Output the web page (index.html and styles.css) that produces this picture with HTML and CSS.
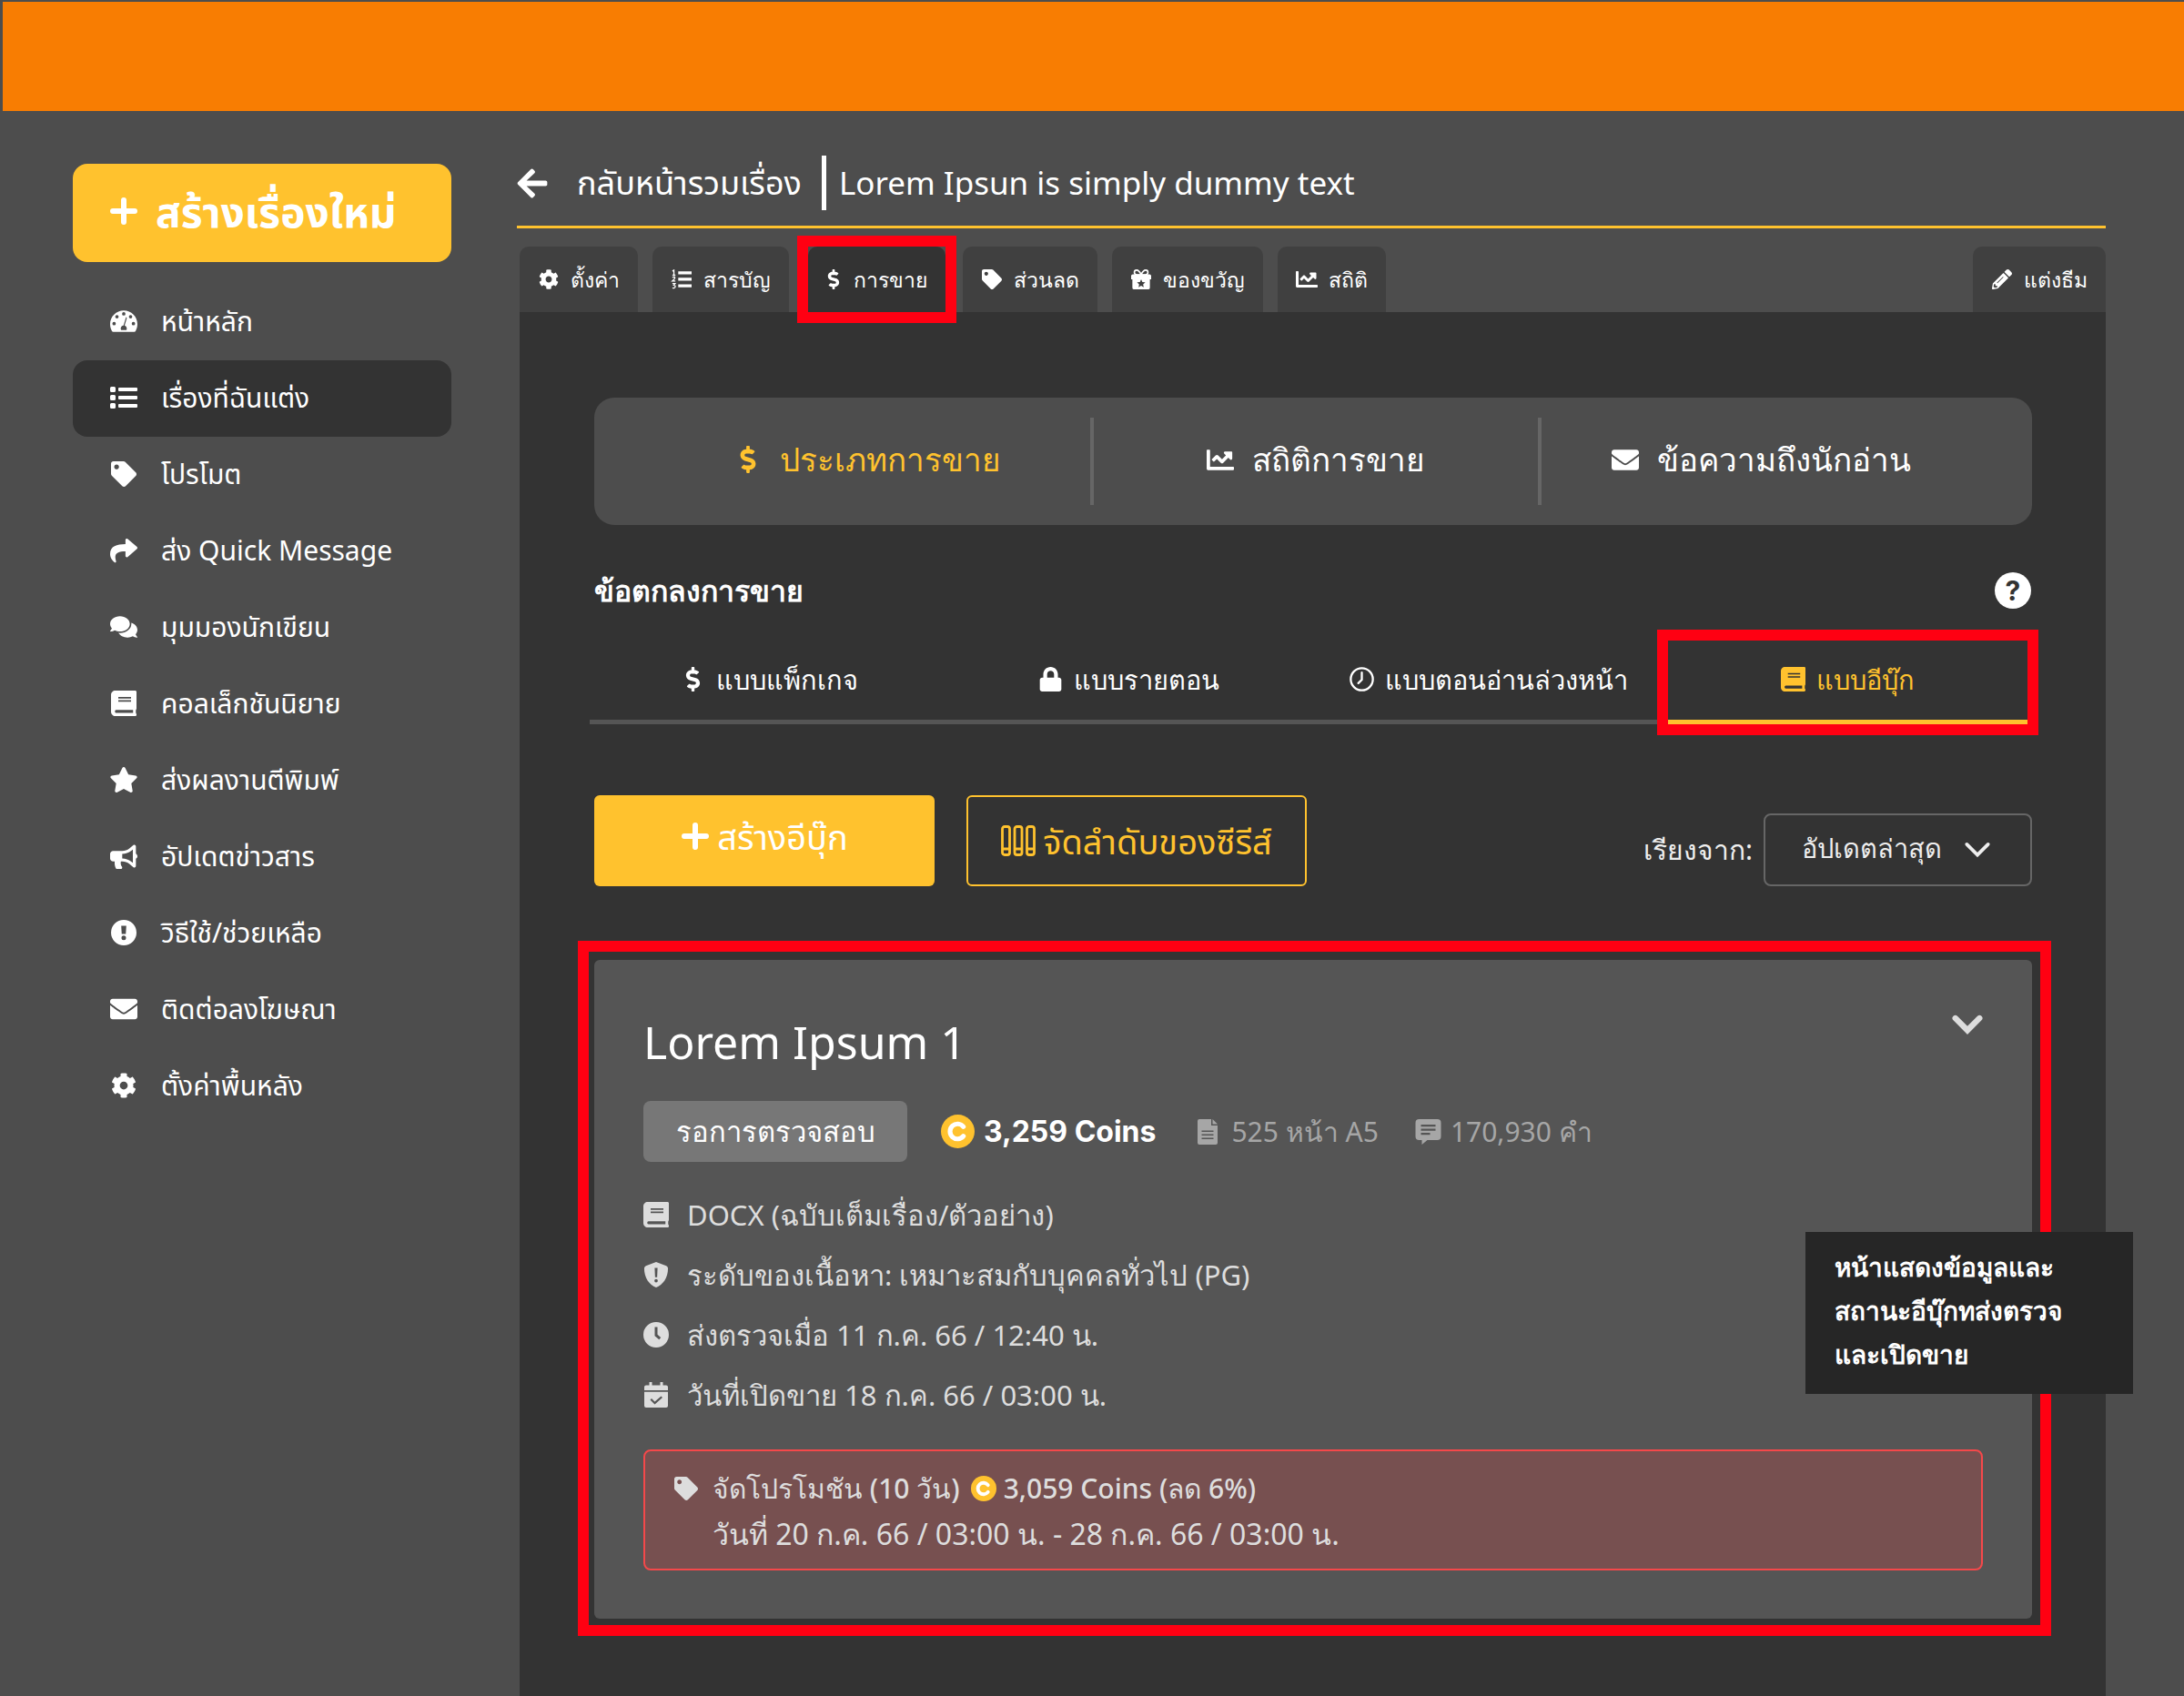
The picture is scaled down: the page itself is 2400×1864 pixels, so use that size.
FILE: index.html
```html
<!DOCTYPE html>
<html lang="th">
<head>
<meta charset="utf-8">
<meta name="viewport" content="width=device-width, initial-scale=1">
<title>การขาย - Lorem Ipsun is simply dummy text</title>
<link rel="stylesheet" href="styles.css">
</head>
<body>
<svg class="sprite" aria-hidden="true">
  <symbol id="i-plus" viewBox="0 0 30 30"><path d="M15 3v24M3 15h24" fill="none" stroke="currentColor" stroke-width="6" stroke-linecap="round"/></symbol>
  <symbol id="i-gauge" viewBox="0 32 576 448"><path fill-rule="evenodd" d="M288 32C129 32 0 161 0 320c0 52.800 14.200 102.300 39 144.800 5.600 9.600 16.300 15.200 27.500 15.200h443c11.100 0 21.800-5.600 27.400-15.200C561.700 422.300 576 372.800 576 320c0-159-129-288-288-288zM288 64a36 36 0 1 1 0 72 36 36 0 1 1 0-72zM144 124a36 36 0 1 1 0 72 36 36 0 1 1 0-72zM432 124a36 36 0 1 1 0 72 36 36 0 1 1 0-72zM84 272a36 36 0 1 1 0 72 36 36 0 1 1 0-72zM492 272a36 36 0 1 1 0 72 36 36 0 1 1 0-72zM335 169c13 4 20 17 16 30l-45 150c27 9 46 34 46 63 0 14-4 22-9 32H233c-6-10-9-20-9-32 0-34 26-62 59-64l44-148c3-12 9-28 8-31z"/></symbol>
  <symbol id="i-list" viewBox="0 0 30 24"><path d="M0 1.500Q0 0 1.500 0h3Q6 0 6 1.500v3Q6 6 4.500 6h-3Q0 6 0 4.500zM0 10.500Q0 9 1.500 9h3Q6 9 6 10.500v3Q6 15 4.500 15h-3Q0 15 0 13.500zM0 19.500Q0 18 1.500 18h3Q6 18 6 19.500v3Q6 24 4.500 24h-3Q0 24 0 22.500zM10 1h19q1 0 1 1v2q0 1-1 1H10q-1 0-1-1V2q0-1 1-1zM10 10h19q1 0 1 1v2q0 1-1 1H10q-1 0-1-1v-2q0-1 1-1zM10 19h19q1 0 1 1v2q0 1-1 1H10q-1 0-1-1v-2q0-1 1-1z"/></symbol>
  <symbol id="i-tag" viewBox="0 0 512 512"><path d="M0 252.118V48C0 21.490 21.490 0 48 0h204.118a48 48 0 0 1 33.941 14.059l211.882 211.882c18.745 18.745 18.745 49.137 0 67.882L293.823 497.941c-18.745 18.745-49.137 18.745-67.882 0L14.059 286.059A48 48 0 0 1 0 252.118zM112 64c-26.510 0-48 21.490-48 48s21.490 48 48 48 48-21.490 48-48-21.490-48-48-48z"/></symbol>
  <symbol id="i-share" viewBox="0 32 512 448"><path d="M503.691 189.836L327.687 37.851C312.281 24.546 288 35.347 288 56.015v80.053C127.371 137.907 0 170.100 0 322.326c0 61.441 39.581 122.309 83.333 154.132 13.653 9.931 33.111-2.533 28.077-18.631C66.066 312.814 132.917 274.316 288 272.085V360c0 20.700 24.300 31.453 39.687 18.164l176.004-152c11.071-9.562 11.086-26.753 0-36.328z"/></symbol>
  <symbol id="i-comments" viewBox="0 32 576 448"><path d="M416 192c0-88.400-93.100-160-208-160S0 103.600 0 192c0 34.300 14.100 65.900 38 92-13.400 30.200-35.500 54.200-35.800 54.500-2.200 2.300-2.800 5.700-1.500 8.700S4.800 352 8 352c36.600 0 66.900-12.300 88.700-25 32.200 15.700 70.300 25 111.300 25 114.900 0 208-71.600 208-160zm122 220c23.900-26 38-57.700 38-92 0-66.900-53.500-124.200-129.300-148.100.9 6.600 1.300 13.300 1.300 20.100 0 105.900-107.700 192-240 192-10.800 0-21.300-.8-31.700-1.900C207.800 439.600 281.800 480 368 480c41 0 79.100-9.200 111.300-25 21.800 12.700 52.100 25 88.700 25 3.200 0 6.100-1.900 7.300-4.800 1.300-2.900.7-6.300-1.500-8.700-.3-.3-22.400-24.200-35.800-54.500z"/></symbol>
  <symbol id="i-book" viewBox="0 0 448 448"><path fill-rule="evenodd" d="M448 315V21c0-12-11-21-24-21H76C34 0 0 34 0 76v296c0 42 34 76 76 76h348c13 0 24-8 24-20v-14c0-7-4-12-9-16-4-14-4-48 0-62 5-4 9-10 9-21zM128 112h224v26H128zM128 168h224v26H128zM388 392H90c-28 0-28-52 0-52h298z"/></symbol>
  <symbol id="i-star" viewBox="20 0 536 512"><path d="M259.300 17.800L194 150.200 47.900 171.500c-26.200 3.800-36.700 36.100-17.700 54.600l105.700 103-25 145.500c-4.500 26.300 23.200 46 46.400 33.700L288 439.600l130.700 68.700c23.200 12.200 50.900-7.400 46.400-33.700l-25-145.500 105.700-103c19-18.500 8.500-50.800-17.700-54.600L382 150.200 316.700 17.800c-11.700-23.600-45.600-23.900-57.400 0z"/></symbol>
  <symbol id="i-horn" viewBox="0 0 576 480"><path d="M576 240c0-23.630-12.950-44.040-32-55.120V32.010C544 23.260 537.020 0 512 0c-7.120 0-14.190 2.380-19.980 7.020l-85.030 68.030C364.280 109.190 310.660 128 256 128H64c-35.350 0-64 28.650-64 64v96c0 35.350 28.650 64 64 64h33.700c-1.390 10.480-2.180 21.140-2.180 32 0 39.770 9.260 77.350 25.560 110.940 5.190 10.690 16.520 17.060 28.400 17.060h74.280c26.050 0 41.690-29.840 25.900-50.560-16.400-21.520-26.150-48.360-26.150-77.440 0-11.110 1.620-21.790 4.410-32H256c54.660 0 108.280 18.810 150.980 52.950l85.030 68.030a32.023 32.023 0 0 0 19.980 7.020c24.920 0 32-22.780 32-32V295.130C563.050 284.040 576 263.630 576 240zm-96 141.420l-33.050-26.440C392.950 311.780 325.120 288 256 288v-96c69.120 0 136.950-23.780 190.950-66.980L480 98.580v282.840z"/></symbol>
  <symbol id="i-alert" viewBox="0 0 30 30"><path fill-rule="evenodd" d="M15 0a15 15 0 1 1 0 30 15 15 0 1 1 0-30zM12 7l.6 9.500h4.800L18 7zM15 18.500a2.700 2.700 0 1 0 0 5.400 2.700 2.700 0 1 0 0-5.400z"/></symbol>
  <symbol id="i-mail" viewBox="0 64 512 384"><path d="M502.300 190.800c3.900-3.100 9.700-.2 9.700 4.700V400c0 26.500-21.500 48-48 48H48c-26.500 0-48-21.500-48-48V195.600c0-5 5.700-7.800 9.700-4.700 22.400 17.400 52.100 39.500 154.100 113.600 21.100 15.400 56.700 47.800 92.200 47.600 35.700.3 72-32.800 92.300-47.600 102-74.100 131.600-96.300 154-113.700zM256 320c23.200.4 56.600-29.200 73.400-41.400 132.700-96.300 142.800-104.700 173.400-128.700 5.800-4.500 9.200-11.500 9.200-18.900v-19c0-26.500-21.500-48-48-48H48c-26.500 0-48 21.500-48 48v19c0 7.400 3.400 14.300 9.200 18.900 30.600 23.900 40.700 32.400 173.400 128.700 16.800 12.200 50.200 41.800 73.400 41.400z"/></symbol>
  <symbol id="i-cog" viewBox="0 0 512 512"><path d="M487.400 315.700l-42.600-24.600c4.300-23.200 4.300-47 0-70.200l42.600-24.600c4.900-2.800 7.100-8.600 5.500-14-11.100-35.600-30-67.800-54.700-94.600-3.800-4.100-10-5.100-14.800-2.300L380.800 110c-17.900-15.400-38.500-27.300-60.800-35.100V25.800c0-5.600-3.900-10.500-9.400-11.700-36.700-8.200-74.300-7.800-109.200 0-5.500 1.200-9.400 6.100-9.400 11.700V75c-22.200 7.900-42.800 19.800-60.800 35.100L88.700 85.500c-4.900-2.800-11-1.900-14.800 2.300-24.700 26.700-43.600 58.900-54.700 94.600-1.700 5.400.6 11.200 5.500 14L67.300 221c-4.300 23.200-4.300 47 0 70.200l-42.600 24.600c-4.900 2.800-7.100 8.600-5.500 14 11.100 35.600 30 67.800 54.700 94.600 3.800 4.100 10 5.100 14.800 2.300l42.600-24.600c17.900 15.400 38.500 27.300 60.800 35.100v49.200c0 5.600 3.900 10.500 9.400 11.700 36.700 8.200 74.300 7.800 109.200 0 5.500-1.200 9.400-6.100 9.400-11.700v-49.200c22.200-7.900 42.800-19.800 60.800-35.100l42.600 24.600c4.900 2.800 11 1.900 14.800-2.300 24.700-26.700 43.600-58.900 54.700-94.600 1.500-5.500-.7-11.300-5.600-14.100zM256 336c-44.100 0-80-35.900-80-80s35.900-80 80-80 80 35.900 80 80-35.900 80-80 80z"/></symbol>
  <symbol id="i-back" viewBox="0 30 448 452"><path d="M257.500 445.100l-22.200 22.200c-9.400 9.400-24.600 9.400-33.900 0L7 273c-9.400-9.400-9.400-24.600 0-33.900L201.400 44.700c9.400-9.400 24.600-9.400 33.900 0l22.200 22.200c9.500 9.500 9.300 25-.4 34.300L136.600 216H424c13.300 0 24 10.700 24 24v32c0 13.300-10.700 24-24 24H136.600l120.500 114.800c9.800 9.300 10 24.800.4 34.300z"/></symbol>
  <symbol id="i-numlist" viewBox="0 0 24 24"><path d="M8 2.500h16v3.500H8zM8 10.200h16v3.500H8zM8 18h16v3.500H8z"/><path d="M1 2l1.800-1v6M1 7h3.600M1 9.800q3-1.800 3 .4Q4 11.500 1 14h3.600M1 17h3.200L2.600 19q2 .2 1.800 1.900Q4 23 1 22.200" fill="none" stroke="currentColor" stroke-width="1.400"/></symbol>
  <symbol id="i-dollar" viewBox="0 0 288 512"><path d="M209.200 233.400l-108-31.600C88.700 198.200 80 186.500 80 173.500c0-16.300 13.200-29.500 29.500-29.500h66.300c12.200 0 24.200 3.700 34.200 10.500 6.100 4.100 14.300 3.100 19.500-2l34.800-34c7.100-6.900 6.100-18.400-1.800-24.500C238 74.800 207.400 64.100 176 64V16c0-8.800-7.200-16-16-16h-32c-8.800 0-16 7.200-16 16v48h-2.500C45.800 64-5.400 118.700.5 183.600c4.200 46.100 39.400 83.600 83.800 96.600l102.500 30c12.500 3.700 21.200 15.300 21.200 28.300 0 16.300-13.200 29.500-29.500 29.500h-66.300C100 368 88 364.300 78 357.500c-6.100-4.100-14.300-3.100-19.500 2l-34.800 34c-7.100 6.900-6.100 18.400 1.800 24.500 24.500 19.200 55.100 29.900 86.500 30v48c0 8.800 7.200 16 16 16h32c8.800 0 16-7.200 16-16v-48.200c46.600-.9 90.300-28.600 105.700-72.700 21.500-61.600-14.600-124.800-72.500-141.700z"/></symbol>
  <symbol id="i-gift" viewBox="0 0 24 24"><path fill-rule="evenodd" d="M0 8q0-2 2-2h20q2 0 2 2v4H0zM1.500 12h21v10q0 2-2 2h-17q-2 0-2-2zM12 12l1.500 3.200 3.500.4-2.600 2.400.7 3.500-3.100-1.800-3.100 1.800.7-3.500L7 15.600l3.500-.4z"/><path d="M12 6.500C10 2 8 1 6.500 1 3 1 3 6 6.500 6.500zM12 6.500C14 2 16 1 17.500 1 21 1 21 6 17.500 6.500z" fill="none" stroke="currentColor" stroke-width="1.800"/></symbol>
  <symbol id="i-chart" viewBox="0 64 512 384"><path d="M496 384H64V80c0-8.840-7.160-16-16-16H16C7.160 64 0 71.160 0 80v336c0 17.670 14.330 32 32 32h464c8.840 0 16-7.160 16-16v-32c0-8.840-7.160-16-16-16zM464 96H345.940c-21.380 0-32.090 25.850-16.970 40.970l32.400 32.400L288 242.750l-73.370-73.370c-12.500-12.500-32.760-12.500-45.250 0l-68.690 68.690c-6.250 6.250-6.250 16.380 0 22.630l22.620 22.620c6.250 6.250 16.380 6.250 22.630 0L192 237.250l73.370 73.370c12.500 12.500 32.760 12.500 45.250 0l96-96 32.400 32.400c15.120 15.120 40.970 4.410 40.970-16.970V112c.01-8.840-7.150-16-15.990-16z"/></symbol>
  <symbol id="i-pencil" viewBox="0 0 512 512"><path fill-rule="evenodd" d="M497.900 142.100l-46.100 46.100c-4.700 4.700-12.300 4.700-17 0l-111-111c-4.700-4.700-4.700-12.300 0-17l46.100-46.100c18.700-18.700 49.100-18.700 67.900 0l60.100 60.100c18.800 18.700 18.800 49.100 0 67.900zM284.200 99.800L21.600 362.400.4 483.900c-2.900 16.400 11.400 30.600 27.800 27.800l121.500-21.300 262.600-262.600c4.700-4.700 4.700-12.300 0-17l-111-111c-4.800-4.700-12.400-4.700-17.100 0zM128 340l150-150q18-4 14 14L142 354q-18 4-14-14zM88 424h48v36l-66 12-30-30 12-66h36z"/></symbol>
  <symbol id="i-lock" viewBox="0 0 448 512"><path d="M400 224h-24v-72C376 68.200 307.800 0 224 0S72 68.200 72 152v72H48c-26.500 0-48 21.500-48 48v192c0 26.500 21.500 48 48 48h352c26.500 0 48-21.500 48-48V272c0-26.500-21.500-48-48-48zm-104 0H152v-72c0-39.700 32.300-72 72-72s72 32.300 72 72v72z"/></symbol>
  <symbol id="i-clock-o" viewBox="0 0 28 28"><circle cx="14" cy="14" r="12.600" fill="none" stroke="currentColor" stroke-width="2.400"/><path d="M14 6.500v8l-4 4" fill="none" stroke="currentColor" stroke-width="2.400" stroke-linecap="round"/></symbol>
  <symbol id="i-rack" viewBox="0 0 38 34"><g fill="none" stroke="currentColor" stroke-width="2.800"><rect x="1.500" y="1.500" width="8" height="31" rx="2.500"/><rect x="15" y="1.500" width="8" height="31" rx="2.500"/><rect x="28.500" y="1.500" width="8" height="31" rx="2.500"/><path d="M1.500 26h8M15 26h8M28.500 26h8"/></g></symbol>
  <symbol id="i-down" viewBox="0 0 32 20"><path d="M3.500 3.500L16 16 28.500 3.500" fill="none" stroke="currentColor" stroke-width="var(--w, 4)" stroke-linecap="round"/></symbol>
  <symbol id="i-coin" viewBox="0 0 36 36"><circle cx="18" cy="18" r="18" fill="#ffc22e"/><path d="M24 13a8 8 0 1 0 0 10" fill="none" stroke="#fff" stroke-width="5" stroke-linecap="round"/></symbol>
  <symbol id="i-doc" viewBox="0 0 22 28"><path fill-rule="evenodd" d="M2 0h13v7h7v19q0 2-2 2H2q-2 0-2-2V2q0-2 2-2zM16.500 0L22 5.500h-5.500zM4.500 12.500h13v1.600h-13zM4.500 16.500h13v1.600h-13zM4.500 20.500h13v1.600h-13z"/></symbol>
  <symbol id="i-note" viewBox="0 0 28 28"><path fill-rule="evenodd" d="M4 0h20q4 0 4 4v15q0 4-4 4H13l-6 5v-5H4q-4 0-4-4V4q0-4 4-4zM6 6h16v2.200H6zM6 10.500h16v2.200H6zM6 15h10v2.200H6z"/></symbol>
  <symbol id="i-shield" viewBox="0 0 28 30"><path fill-rule="evenodd" d="M14 0l12 4.600q2 1 2 3C28 19 22 27 14 30 6 27 0 19 0 7.600q0-2 2-3zM12.300 7l.5 11h2.400l.5-11zM14 20a2 2 0 1 0 0 4 2 2 0 1 0 0-4z"/></symbol>
  <symbol id="i-clock" viewBox="0 0 28 28"><path fill-rule="evenodd" d="M14 0a14 14 0 1 1 0 28 14 14 0 1 1 0-28zM12.500 5.500v9.700l4.800 4 1.900-2.300-3.700-3.200V5.500z"/></symbol>
  <symbol id="i-cal" viewBox="0 0 26 28"><path fill-rule="evenodd" d="M5.500 0h3v3.500h9V0h3v3.500H24q2 0 2 2V9H0V5.500q0-2 2-2h3.500zM0 10.800h26V26q0 2-2 2H2q-2 0-2-2zM8 18l-1.500 1.600 5 4.800 8.500-7.300-1.500-1.700-7 6z"/></symbol>
</svg>

<header class="topbar"></header>

<div class="layout">
  <aside class="sidebar">
    <button class="create-story" type="button"><svg class="ico"><use href="#i-plus"/></svg>สร้างเรื่องใหม่</button>
    <nav class="menu" aria-label="เมนู">
      <a href="#"><svg class="ico"><use href="#i-gauge"/></svg>หน้าหลัก</a>
      <a href="#" class="active" aria-current="page"><svg class="ico"><use href="#i-list"/></svg>เรื่องที่ฉันแต่ง</a>
      <a href="#"><svg class="ico"><use href="#i-tag"/></svg>โปรโมต</a>
      <a href="#"><svg class="ico"><use href="#i-share"/></svg>ส่ง Quick Message</a>
      <a href="#"><svg class="ico"><use href="#i-comments"/></svg>มุมมองนักเขียน</a>
      <a href="#"><svg class="ico"><use href="#i-book"/></svg>คอลเล็กชันนิยาย</a>
      <a href="#"><svg class="ico"><use href="#i-star"/></svg>ส่งผลงานตีพิมพ์</a>
      <a href="#"><svg class="ico"><use href="#i-horn"/></svg>อัปเดตข่าวสาร</a>
      <a href="#"><svg class="ico"><use href="#i-alert"/></svg>วิธีใช้/ช่วยเหลือ</a>
      <a href="#"><svg class="ico"><use href="#i-mail"/></svg>ติดต่อลงโฆษณา</a>
      <a href="#"><svg class="ico"><use href="#i-cog"/></svg>ตั้งค่าพื้นหลัง</a>
    </nav>
  </aside>

  <main class="main">
    <div class="crumbs">
      <a href="#" class="back"><svg class="ico"><use href="#i-back"/></svg>กลับหน้ารวมเรื่อง</a>
      <h1>Lorem Ipsun is simply dummy text</h1>
    </div>

    <nav class="tabs" aria-label="แท็บเรื่อง">
      <a href="#" class="tab"><svg class="ico"><use href="#i-cog"/></svg>ตั้งค่า</a>
      <a href="#" class="tab"><svg class="ico"><use href="#i-numlist"/></svg>สารบัญ</a>
      <a href="#" class="tab current" aria-current="page"><svg class="ico"><use href="#i-dollar"/></svg>การขาย<span class="callout"></span></a>
      <a href="#" class="tab"><svg class="ico"><use href="#i-tag"/></svg>ส่วนลด</a>
      <a href="#" class="tab"><svg class="ico"><use href="#i-gift"/></svg>ของขวัญ</a>
      <a href="#" class="tab"><svg class="ico"><use href="#i-chart"/></svg>สถิติ</a>
      <a href="#" class="tab theme"><svg class="ico"><use href="#i-pencil"/></svg>แต่งธีม</a>
    </nav>

    <div class="panel">
      <nav class="segments" aria-label="การขาย">
        <a href="#" class="on"><svg class="ico narrow"><use href="#i-dollar"/></svg>ประเภทการขาย</a>
        <a href="#"><svg class="ico"><use href="#i-chart"/></svg>สถิติการขาย</a>
        <a href="#" class="last"><svg class="ico"><use href="#i-mail"/></svg>ข้อความถึงนักอ่าน</a>
      </nav>

      <div class="heading">
        <h2>ข้อตกลงการขาย</h2>
        <button class="help" type="button" aria-label="ช่วยเหลือ">?</button>
      </div>

      <nav class="kinds" aria-label="ประเภทการขาย">
        <a href="#"><svg class="ico"><use href="#i-dollar"/></svg>แบบแพ็กเกจ</a>
        <a href="#"><svg class="ico"><use href="#i-lock"/></svg>แบบรายตอน</a>
        <a href="#"><svg class="ico"><use href="#i-clock-o"/></svg>แบบตอนอ่านล่วงหน้า</a>
        <a href="#" class="on" aria-current="page"><svg class="ico"><use href="#i-book"/></svg>แบบอีบุ๊ก<span class="callout"></span></a>
      </nav>

      <div class="actions">
        <button class="btn solid" type="button"><svg class="ico"><use href="#i-plus"/></svg>สร้างอีบุ๊ก</button>
        <button class="btn line" type="button"><svg class="ico"><use href="#i-rack"/></svg>จัดลำดับของซีรีส์</button>
        <div class="sort">
          <label for="sort">เรียงจาก:</label>
          <div class="picker">
            <select id="sort"><option>อัปเดตล่าสุด</option></select>
            <svg class="ico"><use href="#i-down"/></svg>
          </div>
        </div>
      </div>

      <section class="frame">
        <article class="card">
          <div class="card-head">
            <h3>Lorem Ipsum 1</h3>
            <button class="toggle" type="button" aria-label="ย่อ/ขยาย"><svg class="ico"><use href="#i-down"/></svg></button>
          </div>
          <div class="meta">
            <span class="badge">รอการตรวจสอบ</span>
            <strong class="price"><svg class="coin"><use href="#i-coin"/></svg>3,259 Coins</strong>
            <span class="pages"><svg class="ico"><use href="#i-doc"/></svg>525 หน้า A5</span>
            <span class="words"><svg class="ico"><use href="#i-note"/></svg>170,930 คำ</span>
          </div>
          <ul class="details">
            <li><svg class="ico"><use href="#i-book"/></svg>DOCX (ฉบับเต็มเรื่อง/ตัวอย่าง)</li>
            <li><svg class="ico"><use href="#i-shield"/></svg>ระดับของเนื้อหา: เหมาะสมกับบุคคลทั่วไป (PG)</li>
            <li><svg class="ico"><use href="#i-clock"/></svg>ส่งตรวจเมื่อ 11 ก.ค. 66 / 12:40 น.</li>
            <li><svg class="ico"><use href="#i-cal"/></svg>วันที่เปิดขาย 18 ก.ค. 66 / 03:00 น.</li>
          </ul>
          <div class="promo">
            <svg class="ico"><use href="#i-tag"/></svg>
            <div>
              <p class="promo-title">จัดโปรโมชัน (10 วัน)<svg class="coin"><use href="#i-coin"/></svg>3,059 Coins (ลด 6%)</p>
              <p class="promo-date">วันที่ 20 ก.ค. 66 / 03:00 น. - 28 ก.ค. 66 / 03:00 น.</p>
            </div>
          </div>
        </article>
        <p class="tip" role="note">หน้าแสดงข้อมูลและ<br>สถานะอีบุ๊กทส่งตรวจ<br>และเปิดขาย</p>
      </section>
    </div>
  </main>
</div>
</body>
</html>
```
FILE: styles.css
```css
:root {
  --bg: #4d4d4d;
  --panel: #333;
  --tab: #404040;
  --card: #555;
  --yellow: #ffc22e;
  --red: #ff0012;
  --looped: "Noto Sans", sans-serif;
  --loopless: "Noto Sans", "Noto Sans Thai", sans-serif;
}

* { box-sizing: border-box; }

body {
  display: flex;
  flex-direction: column;
  min-height: 100vh;
  margin: 0;
  background: var(--bg);
  color: #fff;
  font-family: var(--looped);
}

h1, h2, h3, p, ul { margin: 0; padding: 0; font-weight: 400; }
ul { list-style: none; }
a { color: inherit; text-decoration: none; }
button, select { font: inherit; color: inherit; border: 0; background: none; padding: 0; cursor: pointer; }

.sprite { position: absolute; width: 0; height: 0; }
.ico, .coin { flex: none; fill: currentColor; }

.topbar { height: 120px; margin: 2px 0 0 3px; background: #f87d02; }

.layout { display: flex; flex: 1; padding: 0 86px 0 80px; }

/* Sidebar */
.sidebar { flex: none; width: 416px; padding-top: 58px; font-family: var(--loopless); }
.create-story {
  display: flex;
  align-items: center;
  width: 100%;
  height: 108px;
  padding: 0 41px 4px;
  gap: 20px;
  border-radius: 16px;
  background: var(--yellow);
  font-size: 46px;
  font-weight: 700;
  line-height: 60px;
}
.create-story .ico { width: 30px; height: 30px; }
.menu { margin-top: 24px; }
.menu a {
  display: flex;
  align-items: center;
  gap: 26px;
  height: 84px;
  padding: 0 41px 2px;
  border-radius: 16px;
  font-size: 30px;
  line-height: 44px;
}
.menu .active { background: var(--panel); }
.menu .ico { width: 30px; height: 28px; }

/* Header of the story */
.main { flex: 1; display: flex; flex-direction: column; min-width: 0; padding: 46px 0 0 72px; }
.crumbs {
  display: flex;
  align-items: center;
  height: 83px;
  padding-bottom: 14px;
  border-bottom: 3px solid var(--yellow);
  font-family: var(--loopless);
  font-size: 35px;
  line-height: 60px;
}
.back { display: flex; align-items: center; gap: 32px; font-size: 36px; }
.back .ico { width: 34px; height: 33px; }
.crumbs h1 { margin-left: 22px; padding-left: 14px; border-left: 5px solid #fff; font-size: 35px; }

.tabs { display: flex; margin: 20px 0 0 3px; font-size: 23px; line-height: 36px; }
.tab {
  position: relative;
  display: flex;
  align-items: center;
  justify-content: center;
  gap: 12px;
  height: 72px;
  margin-right: 16px;
  padding: 0 20px;
  border-radius: 10px 10px 0 0;
  background: var(--tab);
}
.tab.current { margin: 0 19px 0 5px; gap: 14px; background: var(--panel); }
.tab.theme { margin: 0 0 0 auto; }
.tab .ico { width: 24px; height: 22px; }
.tab.current .ico { width: 16px; }
.callout { position: absolute; inset: -12px; border: 12px solid var(--red); z-index: 1; pointer-events: none; }

/* Panel */
.panel { flex: 1; margin-left: 3px; padding: 94px 60px 66px 64px; background: var(--panel); }
.segments {
  display: grid;
  grid-template-columns: 545fr 491fr 543fr;
  align-items: center;
  height: 140px;
  margin: 0 21px 0 18px;
  border-radius: 22px;
  background: var(--bg);
  font-size: 35px;
  line-height: 48px;
}
.segments a { display: flex; align-items: center; justify-content: center; gap: 20px; height: 96px; padding-bottom: 4px; }
.segments a + a { border-left: 4px solid #666; }
.segments .on { color: var(--yellow); padding-left: 56px; }
.segments .last { padding-right: 56px; }
.segments .ico { width: 30px; height: 23px; }
.segments .narrow { height: 30px; }

.heading { display: flex; align-items: center; justify-content: space-between; margin: 47px 22px 0 18px; height: 50px; }
.heading h2 { font-size: 32px; font-weight: 600; line-height: 50px; }
.help { width: 40px; height: 40px; border-radius: 50%; background: #fff; color: var(--panel); font: 700 30px/40px Inter, sans-serif; }

.kinds { display: grid; grid-template-columns: repeat(4, 1fr); margin: 30px 26px 0 13px; font-size: 29px; font-weight: 500; line-height: 44px; }
.kinds a {
  position: relative;
  display: flex;
  align-items: center;
  justify-content: center;
  gap: 12px;
  height: 92px;
  padding-bottom: 2px;
  border-bottom: 5px solid #555;
}
.kinds .on { color: var(--yellow); border-color: var(--yellow); }
.kinds .ico { width: 27px; height: 27px; }
.kinds .callout { inset: -12px -12px -17px -12px; }

.actions { display: flex; align-items: flex-end; gap: 35px; margin: 78px 21px 0 18px; font-size: 38px; line-height: 54px; font-family: var(--loopless); }
.btn { display: flex; align-items: center; justify-content: center; gap: 8px; width: 374px; height: 100px; border-radius: 6px; }
.solid { background: var(--yellow); padding-bottom: 10px; }
.solid .ico { width: 32px; height: 30px; }
.line { border: 2px solid var(--yellow); color: var(--yellow); }
.line .ico { width: 38px; height: 34px; }
.sort { display: flex; align-items: center; gap: 12px; margin-left: auto; font: 30px/44px var(--looped); color: #eee; }
.picker { position: relative; }
.picker select {
  appearance: none;
  width: 295px;
  height: 80px;
  padding: 0 76px 4px 40px;
  border: 2px solid #666;
  border-radius: 8px;
  font-size: 29px;
}
.picker .ico { position: absolute; right: 45px; top: 30px; width: 30px; height: 20px; pointer-events: none; }

/* Ebook card */
.frame { position: relative; margin-top: 60px; border: 12px solid var(--red); padding: 9px 9px 7px 6px; }
.card { padding: 52px 54px 53px; border-radius: 6px; background: var(--card); }
.card-head { display: flex; align-items: flex-start; justify-content: space-between; }
.card-head h3 { font-size: 50px; line-height: 76px; }
.toggle { display: flex; padding-top: 8px; color: #ddd; --w: 6; }
.toggle .ico { width: 34px; height: 22px; }
.meta { display: flex; align-items: center; margin-top: 27px; line-height: 48px; font-size: 30px; color: #a6a6a6; }
.badge { width: 290px; height: 67px; border-radius: 8px; background: #777; color: #fff; font-size: 31px; line-height: 66px; text-align: center; }
.price { display: flex; align-items: center; gap: 10px; margin-left: 37px; color: #fff; font: 700 32px/48px Inter, sans-serif; }
.price .coin { width: 37px; height: 37px; }
.pages, .words { display: flex; align-items: center; }
.pages { gap: 15px; margin-left: 46px; }
.words { gap: 10px; margin-left: 40px; }
.pages .ico { width: 22px; height: 28px; }
.words .ico { width: 29px; height: 28px; }
.details { margin-top: 25px; font-size: 31px; line-height: 66px; color: #ddd; }
.details li { display: flex; align-items: center; gap: 20px; }
.details .ico { width: 28px; height: 28px; }
.promo {
  display: flex;
  gap: 16px;
  margin-top: 27px;
  padding: 16px 32px 13px;
  border: 2px solid #f5484a;
  border-radius: 8px;
  background: #775050;
  color: #ddd;
}
.promo .ico { width: 26px; height: 26px; margin-top: 12px; }
.promo-title { display: flex; align-items: center; font-size: 30px; font-weight: 500; line-height: 50px; }
.promo-title .coin { width: 28px; height: 28px; margin: 0 8px 0 12px; }
.promo-date { font-size: 32px; line-height: 50px; }
.tip {
  position: absolute;
  right: -102px;
  top: 308px;
  width: 360px;
  padding: 14px 32px 20px;
  background: #262626;
  font-size: 28px;
  font-weight: 600;
  line-height: 48px;
}
```
